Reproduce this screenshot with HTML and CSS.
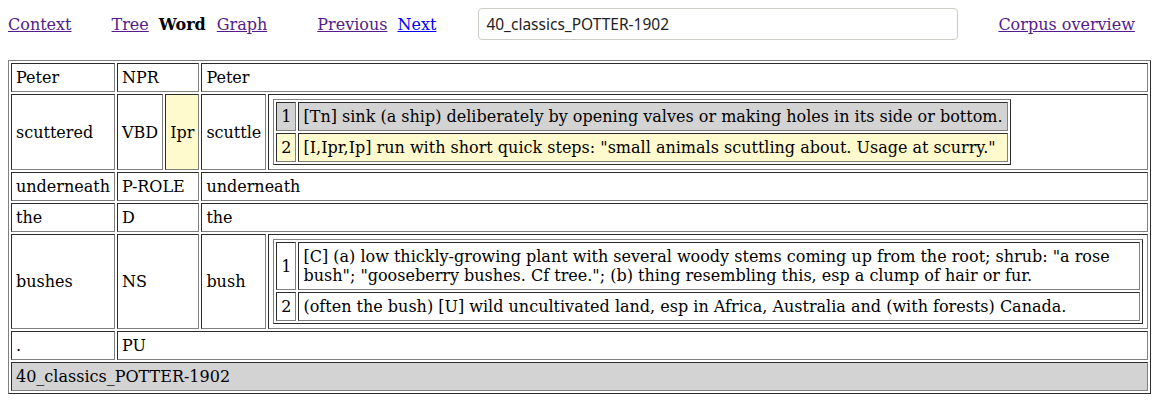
FILE: index.html
```html
<!DOCTYPE html>
<html>
<head>
<meta charset="utf-8">
<link rel="stylesheet" href="styles.css">
</head>
<body>
<div class="nav">
  <a class="lnk visited g-context" href="#">Context</a>
  <span class="group g-views">
    <a class="lnk visited" href="#">Tree</a>
    <b class="current">Word</b>
    <a class="lnk visited" href="#">Graph</a>
  </span>
  <span class="group g-pager">
    <a class="lnk visited" href="#">Previous</a>
    <a class="lnk fresh" href="#">Next</a>
  </span>
  <input class="search" type="text" value="40_classics_POTTER-1902">
  <a class="lnk visited g-corpus" href="#">Corpus overview</a>
</div>

<table class="grid">
  <tr>
    <td>Peter</td>
    <td colspan="2">NPR</td>
    <td colspan="2">Peter</td>
  </tr>
  <tr>
    <td>scuttered</td>
    <td>VBD</td>
    <td class="hl">Ipr</td>
    <td>scuttle</td>
    <td>
      <table class="grid defs">
        <tr class="gray">
          <td>1</td>
          <td>[Tn] sink (a ship) deliberately by opening valves or making holes in its side or bottom.</td>
        </tr>
        <tr class="hl">
          <td>2</td>
          <td>[I,Ipr,Ip] run with short quick steps: "small animals scuttling about. Usage at scurry."</td>
        </tr>
      </table>
    </td>
  </tr>
  <tr>
    <td>underneath</td>
    <td colspan="2">P-ROLE</td>
    <td colspan="2">underneath</td>
  </tr>
  <tr>
    <td>the</td>
    <td colspan="2">D</td>
    <td colspan="2">the</td>
  </tr>
  <tr>
    <td>bushes</td>
    <td colspan="2">NS</td>
    <td>bush</td>
    <td>
      <table class="grid defs">
        <tr>
          <td>1</td>
          <td>[C] (a) low thickly-growing plant with several woody stems coming up from the root; shrub: "a rose bush"; "gooseberry bushes. Cf tree."; (b) thing resembling this, esp a clump of hair or fur.</td>
        </tr>
        <tr>
          <td>2</td>
          <td>(often the bush) [U] wild uncultivated land, esp in Africa, Australia and (with forests) Canada.</td>
        </tr>
      </table>
    </td>
  </tr>
  <tr>
    <td>.</td>
    <td colspan="4">PU</td>
  </tr>
  <tr class="gray">
    <td colspan="5">40_classics_POTTER-1902</td>
  </tr>
</table>
</body>
</html>
```

FILE: styles.css
```css
body {
  margin: 8px;
  font-family: "DejaVu Serif", serif;
  font-size: 16px;
  color: #000;
  background: #fff;
}

.nav {
  display: flex;
  align-items: center;
  height: 32px;
  margin-bottom: 20px;
  white-space: nowrap;
}

.lnk { text-decoration: underline; }
.visited { color: #551a8b; }
.fresh { color: #0000ee; }

.g-views {
  margin-left: 40px;
  display: flex;
  gap: 10px;
}
.g-views .current { margin-right: 1px; }
.g-pager {
  margin-left: 50px;
  display: flex;
  gap: 10px;
}
.search {
  margin-left: 42px;
  width: 480px;
  height: 32px;
  box-sizing: border-box;
  border: 1px solid #cdcbc6;
  border-radius: 4px;
  padding: 0 7px;
  font-family: "Noto Sans", sans-serif;
  font-size: 15.5px;
  color: #222;
  background: #fff;
}
.g-corpus { margin-left: 40px; }

.grid {
  border-collapse: separate;
  border-spacing: 2px;
  border: 1px outset gray;
}
.grid > tbody > tr > td {
  border: 1px inset gray;
  padding: 4px;
  vertical-align: middle;
  text-align: left;
}
table.grid:not(.defs) { width: 100%; }

.gray > td { background: #d3d3d3; }
.hl, .hl > td { background: #fffacd; }
```
